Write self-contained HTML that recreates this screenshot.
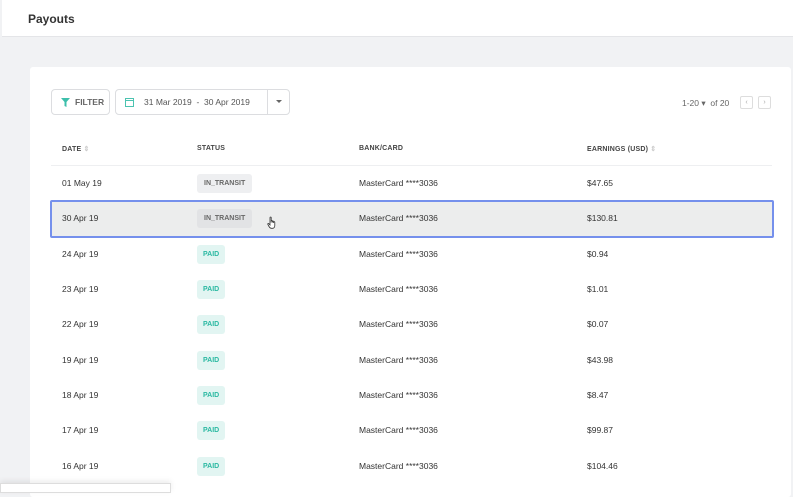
<!DOCTYPE html>
<html><head><style>
*{box-sizing:border-box;margin:0;padding:0}
body{width:793px;height:490px;overflow:hidden;background:#f1f2f4;font-family:"Liberation Sans",sans-serif;color:#333;position:relative}
.hdr{position:absolute;left:2px;top:0;width:791px;height:37px;background:#fff;border-bottom:1px solid #e4e5e8}
.hdr span{position:absolute;left:26px;top:12px;font-size:12px;font-weight:bold;color:#333}
.card{position:absolute;left:30px;top:67px;width:761px;height:430px;background:#fff;border-radius:3px}
.btn{position:absolute;top:89px;height:26px;border:1px solid #dcdde0;border-radius:4px;background:#fff;font-size:8.5px;color:#555}
.t{position:absolute;font-size:8.5px;color:#333}
.h{position:absolute;top:145px;font-size:7px;font-weight:bold;color:#444;letter-spacing:.2px}
.tag{position:absolute;height:19px;display:flex;align-items:center;padding:0 7px;border-radius:3px;font-size:7px;font-weight:bold}
.tr{background:#eeeff1;color:#666}
.pd{background:#e2f5f2;color:#2bb9a2;padding:0 6px}
.sel{position:absolute;left:50px;top:200px;width:724px;height:38px;background:#eceded;border:2px solid #7590ec;border-radius:2px}
</style></head><body>
<div class="hdr"><span>Payouts</span></div>
<div class="card"></div>
<div class="btn" style="left:51px;width:59px"><svg style="position:absolute;left:9px;top:8px" width="9" height="9" viewBox="0 0 9 9"><path d="M0 0H9L5.5 4V9L3.5 8V4Z" fill="#3dbfab"/></svg><span style="position:absolute;left:23px;top:7px;font-weight:bold;color:#666">FILTER</span></div>
<div class="btn" style="left:115px;width:175px"><svg style="position:absolute;left:9px;top:7px" width="9" height="10" viewBox="0 0 9 10"><rect x="0.5" y="1.5" width="8" height="8" fill="none" stroke="#4cc3b0"/><line x1="0.5" y1="3.5" x2="8.5" y2="3.5" stroke="#4cc3b0"/></svg><span style="position:absolute;left:28px;top:7px">31 Mar 2019 &nbsp;- &nbsp;30 Apr 2019</span><div style="position:absolute;left:151px;top:0;width:1px;height:24px;background:#dcdde0"></div><svg style="position:absolute;left:160px;top:10px" width="6" height="4"><path d="M0 0H6L3 3Z" fill="#666"/></svg></div>
<div class="t" style="left:682px;top:98px;color:#666">1-20 ▾ &nbsp;of 20</div>
<div style="position:absolute;left:740px;top:96px;width:13px;height:13px;border:1px solid #ddd;border-radius:2px;font-size:7px;color:#aaa;text-align:center;line-height:11px">‹</div>
<div style="position:absolute;left:758px;top:96px;width:13px;height:13px;border:1px solid #ddd;border-radius:2px;font-size:7px;color:#aaa;text-align:center;line-height:11px">›</div>
<div class="h" style="left:62px">DATE <span style="color:#ccc">⇕</span></div>
<div class="h" style="left:197px">STATUS</div>
<div class="h" style="left:359px">BANK/CARD</div>
<div class="h" style="left:587px">EARNINGS (USD) <span style="color:#ccc">⇕</span></div>
<div style="position:absolute;left:51px;top:165px;width:721px;height:1px;background:#eeeff1"></div>
<div class="sel"></div>
<div class="t" style="left:62px;top:178px">01 May 19</div><div class="tag tr" style="left:197px;top:174px">IN_TRANSIT</div><div class="t" style="left:359px;top:178px">MasterCard ****3036</div><div class="t" style="left:587px;top:178px">$47.65</div>
<div class="t" style="left:62px;top:213px">30 Apr 19</div><div class="tag tr" style="left:197px;top:209px;background:#e2e3e5">IN_TRANSIT</div>
<svg style="position:absolute;left:267px;top:216px" width="11" height="13" viewBox="0 0 11 13"><path d="M3 1.5C3 .8 4.2 .8 4.2 1.5V6.5V5C4.2 4.3 5.4 4.3 5.4 5V6.5V5.5C5.4 4.8 6.6 4.8 6.6 5.5V7V6.2C6.6 5.5 7.8 5.5 7.8 6.2V9.5C7.8 11 7 12.3 5.5 12.3H4.5C3.3 12.3 2.6 11.5 2 10.5L.8 8.3C.5 7.7 1.3 7.1 1.8 7.7L3 9Z" fill="#fff" stroke="#333" stroke-width=".8"/></svg>
<div class="t" style="left:359px;top:213px">MasterCard ****3036</div><div class="t" style="left:587px;top:213px">$130.81</div>
<div class="t" style="left:62px;top:249px">24 Apr 19</div><div class="tag pd" style="left:197px;top:245px">PAID</div><div class="t" style="left:359px;top:249px">MasterCard ****3036</div><div class="t" style="left:587px;top:249px">$0.94</div>
<div class="t" style="left:62px;top:284px">23 Apr 19</div><div class="tag pd" style="left:197px;top:280px">PAID</div><div class="t" style="left:359px;top:284px">MasterCard ****3036</div><div class="t" style="left:587px;top:284px">$1.01</div>
<div class="t" style="left:62px;top:319px">22 Apr 19</div><div class="tag pd" style="left:197px;top:315px">PAID</div><div class="t" style="left:359px;top:319px">MasterCard ****3036</div><div class="t" style="left:587px;top:319px">$0.07</div>
<div class="t" style="left:62px;top:355px">19 Apr 19</div><div class="tag pd" style="left:197px;top:351px">PAID</div><div class="t" style="left:359px;top:355px">MasterCard ****3036</div><div class="t" style="left:587px;top:355px">$43.98</div>
<div class="t" style="left:62px;top:390px">18 Apr 19</div><div class="tag pd" style="left:197px;top:386px">PAID</div><div class="t" style="left:359px;top:390px">MasterCard ****3036</div><div class="t" style="left:587px;top:390px">$8.47</div>
<div class="t" style="left:62px;top:425px">17 Apr 19</div><div class="tag pd" style="left:197px;top:421px">PAID</div><div class="t" style="left:359px;top:425px">MasterCard ****3036</div><div class="t" style="left:587px;top:425px">$99.87</div>
<div class="t" style="left:62px;top:461px">16 Apr 19</div><div class="tag pd" style="left:197px;top:457px">PAID</div><div class="t" style="left:359px;top:461px">MasterCard ****3036</div><div class="t" style="left:587px;top:461px">$104.46</div>
<div style="position:absolute;left:0;top:483px;width:171px;height:10px;background:#fff;border:1px solid #ddd;box-shadow:0 -2px 6px rgba(0,0,0,.08)"></div>
</body></html>
